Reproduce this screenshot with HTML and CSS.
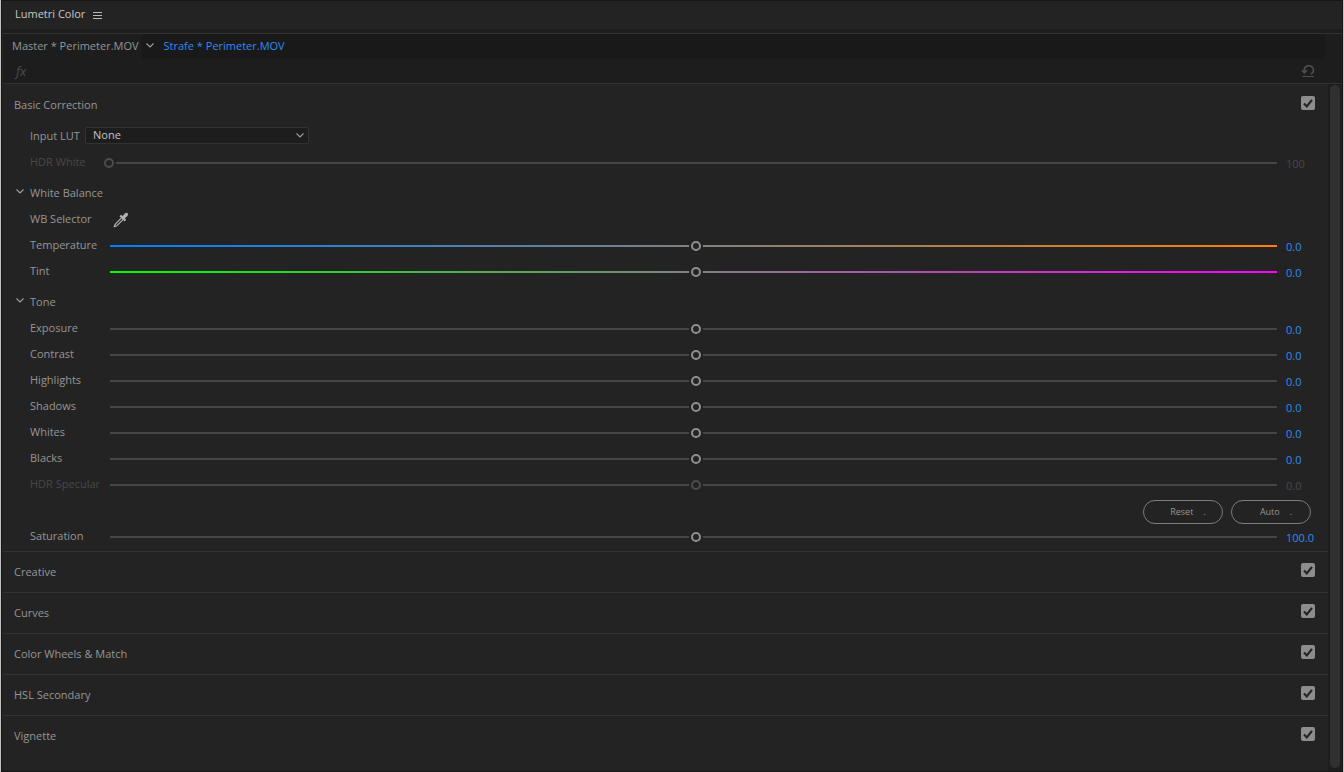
FILE: index.html
```
<!DOCTYPE html>
<html lang="en">
<head>
<meta charset="utf-8">
<title>Lumetri Color</title>
<link rel="stylesheet" href="styles.css">
</head>
<body>
<svg class="defs" aria-hidden="true">
  <symbol id="chevron" viewBox="0 0 8 5"><path d="M.5.5L4 4 7.500.5" fill="none" stroke="currentColor" stroke-width="1.1"/></symbol>
</svg>
<main class="panel">
  <header class="titlebar">
    <h1 class="title">Lumetri Color</h1>
    <button class="icon-btn menu" aria-label="Panel menu"><svg width="9" height="9" viewBox="0 0 9 9" shape-rendering="crispEdges"><path d="M0 1.500h9M0 4.500h9M0 7.500h9" stroke="currentColor"/></svg></button>
  </header>
  <div class="clipbar">
    <button class="tab master">Master * Perimeter.MOV</button>
    <div class="sequence">
      <button class="icon-btn" aria-label="Choose clip"><svg class="chev"><use href="#chevron"/></svg></button>
      <button class="tab active">Strafe * Perimeter.MOV</button>
    </div>
  </div>
  <div class="toolbar">
    <button class="icon-btn fx" aria-label="Toggle effect">fx</button>
    <button class="icon-btn reset" aria-label="Reset effect"><svg width="14" height="12" viewBox="0 0 14 12"><path d="M3.400 6A4.500 4.500 0 1 1 10 9.200" fill="none" stroke="currentColor" stroke-width="1.700"/><path d="M0 5.200h6.800L3.400 9.200z" fill="currentColor"/><path d="M1 11.500h12" stroke="currentColor"/></svg></button>
  </div>
  <div class="content">
    <div class="sections">
      <section class="section basic">
        <div class="section-head"><label for="s0">Basic Correction</label><input class="check" type="checkbox" id="s0" checked></div>
        <div class="lut">
          <label for="lut">Input LUT</label>
          <div class="select-wrap"><select id="lut"><option>None</option></select><svg class="chev"><use href="#chevron"/></svg></div>
        </div>
        <div class="row disabled start"><label for="r0">HDR White</label><input id="r0" type="range" min="0" max="100" value="0" disabled><output for="r0">100</output></div>
        <button class="group"><svg class="chev"><use href="#chevron"/></svg><span>White Balance</span></button>
        <div class="row"><label for="wb">WB Selector</label><button class="icon-btn dropper" id="wb"><svg width="16" height="16" viewBox="0 0 16 16"><path d="M8.700 5.700L2.600 11.900Q1.500 13.300 1.300 14.700Q2.900 14.600 4.200 13.400L10.300 7.300" fill="none" stroke="currentColor" stroke-width="1.200"/><path d="M6.500 4.300l1.500-1.500 1.600 1.200 1.800-2c1-1.200 2.400-1.500 3.200-.7s.5 2.200-.7 3.200l-2 1.800 1.200 1.600L11.600 9.500z" fill="currentColor"/></svg></button></div>
        <div class="row temperature"><label for="r1">Temperature</label><input id="r1" type="range"><output for="r1">0.0</output></div>
        <div class="row tint"><label for="r2">Tint</label><input id="r2" type="range"><output for="r2">0.0</output></div>
        <button class="group"><svg class="chev"><use href="#chevron"/></svg><span>Tone</span></button>
        <div class="row"><label for="r3">Exposure</label><input id="r3" type="range"><output for="r3">0.0</output></div>
        <div class="row"><label for="r4">Contrast</label><input id="r4" type="range"><output for="r4">0.0</output></div>
        <div class="row"><label for="r5">Highlights</label><input id="r5" type="range"><output for="r5">0.0</output></div>
        <div class="row"><label for="r6">Shadows</label><input id="r6" type="range"><output for="r6">0.0</output></div>
        <div class="row"><label for="r7">Whites</label><input id="r7" type="range"><output for="r7">0.0</output></div>
        <div class="row"><label for="r8">Blacks</label><input id="r8" type="range"><output for="r8">0.0</output></div>
        <div class="row disabled"><label for="r9">HDR Specular</label><input id="r9" type="range" disabled><output for="r9">0.0</output></div>
        <div class="actions"><button class="pill"><span>Reset</span><span>.</span></button><button class="pill"><span>Auto</span><span>.</span></button></div>
        <div class="row"><label for="r10">Saturation</label><input id="r10" type="range" min="0" max="200" value="100"><output for="r10">100.0</output></div>
      </section>
      <section class="section"><div class="section-head"><label for="s1">Creative</label><input class="check" type="checkbox" id="s1" checked></div></section>
      <section class="section"><div class="section-head"><label for="s2">Curves</label><input class="check" type="checkbox" id="s2" checked></div></section>
      <section class="section"><div class="section-head"><label for="s3">Color Wheels &amp; Match</label><input class="check" type="checkbox" id="s3" checked></div></section>
      <section class="section"><div class="section-head"><label for="s4">HSL Secondary</label><input class="check" type="checkbox" id="s4" checked></div></section>
      <section class="section"><div class="section-head"><label for="s5">Vignette</label><input class="check" type="checkbox" id="s5" checked></div></section>
    </div>
    <div class="scrollbar"><div class="scroll-thumb"></div></div>
  </div>
</main>
</body>
</html>
```

FILE: styles.css
```
* { box-sizing: border-box; }

:root {
  --bg: #232323;
  --bar: #1d1d1d;
  --line: #323232;
  --text: #969696;
  --dim: #484848;
  --blue: #2d8cf5;
  --ring: #8f8f8f;
}

body {
  margin: 0;
  background: var(--bg);
  color: var(--text);
  font: 11px/16px "Open Sans", "Noto Sans", sans-serif;
}

button, select, input { font: inherit; color: inherit; margin: 0; }
button { border: 0; padding: 0; background: none; }

.defs { position: absolute; width: 0; height: 0; }
.chev { display: block; width: 8px; height: 5px; color: #a0a0a0; }
.icon-btn { display: flex; align-items: center; justify-content: center; }

.panel {
  min-height: 100vh;
  display: flex;
  flex-direction: column;
  border: 1px solid #c4c4bf;
  border-width: 0 1px;
  box-shadow: inset 1px 1px #161616, inset -1px -1px #161616;
  padding: 1px 1px 1px 2px;
}

.titlebar {
  display: flex;
  align-items: center;
  gap: 8px;
  height: 33px;
  padding: 0 12px 6px;
  border-bottom: 1px solid var(--line);
  background: linear-gradient(var(--bg) 28px, var(--bar) 28px);
}
.title { margin: 0; font-size: 11px; font-weight: 400; color: #c8c8c8; }
.menu { color: #b8b8b8; padding-top: 2px; }

.clipbar { display: flex; height: 25px; background: var(--bar); padding-right: 17px; }
.tab { white-space: nowrap; padding-bottom: 2px; }
.master { padding: 0 3px 2px 9px; }
.sequence { flex: 1; display: flex; align-items: center; gap: 10px; padding-left: 4px; background: #191919; }
.sequence .chev { margin-bottom: 2px; }
.active { color: var(--blue); }

.toolbar {
  display: flex;
  align-items: center;
  justify-content: space-between;
  height: 25px;
  padding: 0 27px 1px 13px;
  background: var(--bar);
  border-bottom: 1px solid var(--line);
  color: #4c4c4c;
}
.fx { font-size: 13px; font-style: italic; }

.content { flex: 1; display: flex; }
.sections { flex: 1; min-width: 0; }
.section { border-top: 1px solid var(--line); }
.basic { border-top: 0; padding: 1px 0; }

.section-head {
  display: flex;
  align-items: center;
  justify-content: space-between;
  height: 40px;
  padding: 0 13px 0 11px;
}
.check {
  appearance: none;
  width: 14px;
  height: 14px;
  margin-bottom: 4px;
  border-radius: 2px;
  background: #8d8d8d;
}
.check:checked {
  background: #8d8d8d url("data:image/svg+xml,%3Csvg xmlns='http://www.w3.org/2000/svg' viewBox='0 0 14 14'%3E%3Cpath d='M3 7.500l2.800 2.900L11 3.900' fill='none' stroke='%23232323' stroke-width='2.200'/%3E%3C/svg%3E");
}

.lut { display: flex; align-items: flex-start; height: 25px; padding-left: 27px; }
.lut label { width: 55px; padding-top: 3px; }
.select-wrap { display: grid; align-items: center; width: 224px; padding-top: 2px; }
.select-wrap > * { grid-area: 1 / 1; }
.select-wrap .chev { justify-self: end; margin-right: 5px; pointer-events: none; }
.select-wrap select {
  appearance: none;
  width: 100%;
  height: 17px;
  padding: 0 20px 2px 7px;
  border: 1px solid #323232;
  border-radius: 2px;
  background: var(--bar);
  color: #c4c4c4;
  line-height: 13px;
}

.row {
  display: grid;
  grid-template-columns: 80px 1fr 46px;
  align-items: center;
  height: 26px;
  padding-left: 27px;
}
.row label { padding-bottom: 2px; white-space: nowrap; }
.row output { padding: 2px 0 0 4px; color: var(--blue); }
.dropper { justify-self: start; margin-left: 3px; color: #b0b0b0; }

.row input {
  appearance: none;
  width: 100%;
  height: 14px;
  --track: linear-gradient(#464646, #464646);
  background: var(--track) left center / calc(100% - 5px) 2px no-repeat;
}
.row input::-webkit-slider-thumb {
  appearance: none;
  width: 10px;
  height: 10px;
  border: 2px solid var(--ring);
  border-radius: 50%;
  background: var(--bg);
  box-shadow: 0 0 0 2px var(--bg);
}
.temperature input { --track: linear-gradient(90deg, #0080ff, #808080, #ff8000); }
.tint input { --track: linear-gradient(90deg, #00ff00, #808080, #ff00ff); }
.disabled { --ring: #4c4c4c; color: var(--dim); }
.row.disabled output { color: var(--dim); }
.start { grid-template-columns: 74px 1fr 46px; }

.group {
  display: flex;
  align-items: center;
  gap: 6px;
  height: 31px;
  padding: 3px 13px 0;
}
.group .chev { margin-bottom: 3px; }

.actions { display: flex; justify-content: flex-end; gap: 8px; height: 26px; padding: 2px 17px 0 0; }
.pill {
  display: flex;
  align-items: center;
  justify-content: center;
  gap: 10px;
  width: 80px;
  height: 24px;
  padding-left: 10px;
  border: 1px solid #7c7c7c;
  border-radius: 12px;
  font-size: 9px;
}

.scrollbar { display: flex; width: 14px; padding: 1px 2px 3px; background: #1e1e1e; }
.scroll-thumb { flex: 1; border-radius: 5px; background: #303030; }
```
